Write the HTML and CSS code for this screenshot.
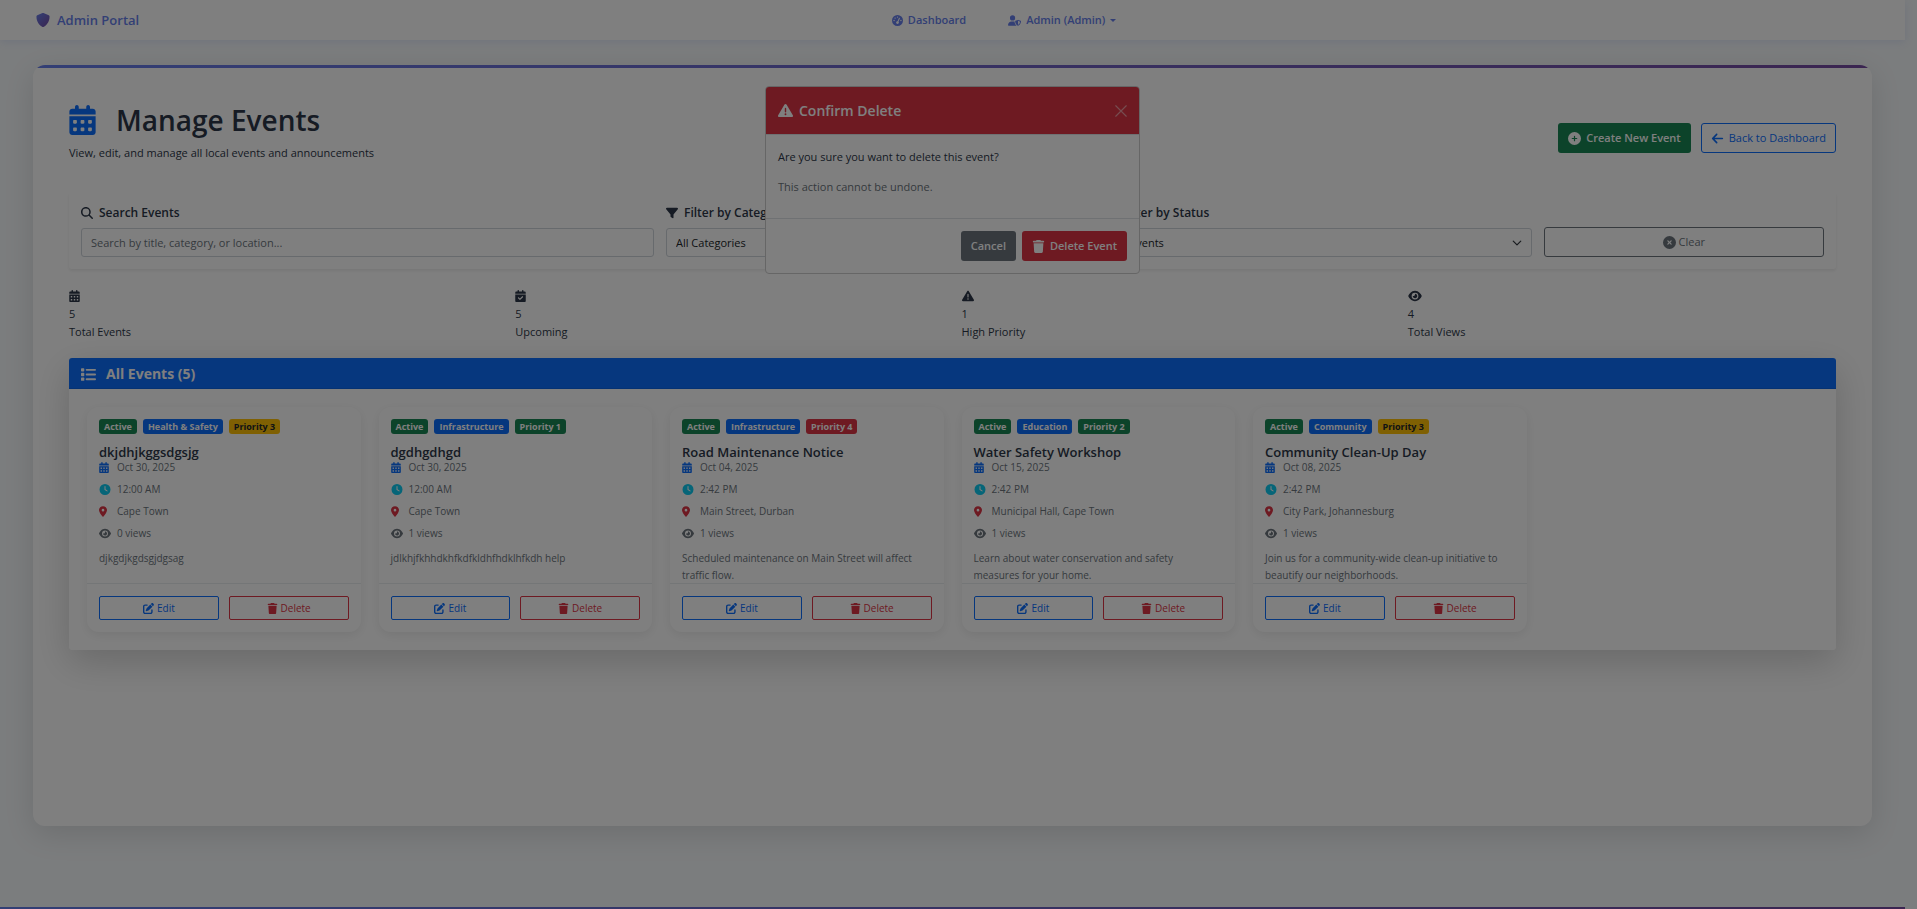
FILE: index.html
```html
<!DOCTYPE html>
<html lang="en">
<head>
<meta charset="utf-8">
<meta name="viewport" content="width=device-width, initial-scale=1">
<title>Manage Events - Admin Portal</title>
<link rel="stylesheet" href="styles.css">
</head>
<body>
<svg class="sprite" aria-hidden="true">
  <linearGradient id="brand-fill" x1="0" y1="0" x2="1" y2="1"><stop offset="0" stop-color="#667eea"/><stop offset="1" stop-color="#764ba2"/></linearGradient>
  <symbol id="i-shield" viewBox="0 0 512 512"><path fill="url(#brand-fill)" d="M466.5 83.7l-192-80a48.15 48.15 0 0 0-36.9 0l-192 80C27.7 91.1 16 108.6 16 128c0 198.5 114.5 335.7 221.5 380.3 11.8 4.9 25.1 4.9 36.9 0C360.1 472.6 496 349.3 496 128c0-19.4-11.7-36.9-29.5-44.3z"/></symbol>
  <symbol id="i-gauge" viewBox="0 0 512 512"><path fill-rule="evenodd" d="M0 256a256 256 0 1 1 512 0A256 256 0 1 1 0 256zM288 96a32 32 0 1 0 -64 0 32 32 0 1 0 64 0zM256 416c35.3 0 64-28.7 64-64c0-17.4-6.9-33.1-18.1-44.6L366 161.7c5.3-12.1-.2-26.3-12.3-31.6s-26.3 .2-31.6 12.3L257.9 288c-.6 0-1.3 0-1.9 0c-35.3 0-64 28.7-64 64s28.7 64 64 64zM176 144a32 32 0 1 0 -64 0 32 32 0 1 0 64 0zM96 288a32 32 0 1 0 0-64 32 32 0 1 0 0 64zm352-32a32 32 0 1 0 -64 0 32 32 0 1 0 64 0z"/></symbol>
  <symbol id="i-user-shield" viewBox="0 0 640 512"><path d="M224 256A128 128 0 1 0 224 0a128 128 0 1 0 0 256zm-45.7 48C79.8 304 0 383.8 0 482.3C0 498.7 13.3 512 29.7 512H418.3c1.8 0 3.5-.2 5.3-.5c-76.3-55.1-99.8-141-103.1-200.2c-16.1-4.8-33.1-7.3-50.7-7.3H178.3zm308.8-78.3l-120 48C358 277.4 352 286.2 352 296c0 63.3 25.9 168.8 134.8 214.2c5.9 2.5 12.6 2.5 18.5 0C614.1 464.8 640 359.3 640 296c0-9.8-6-18.6-15.1-22.3l-120-48c-5.7-2.3-12.1-2.3-17.8 0zM591.4 312c-3.9 50.7-27.2 116.7-95.4 149.7V273.8L591.4 312z"/></symbol>
  <symbol id="i-calendar" viewBox="0 0 448 512"><path fill-rule="evenodd" d="M128 0c17.7 0 32 14.3 32 32V64H288V32c0-17.7 14.3-32 32-32s32 14.3 32 32V64h48c26.5 0 48 21.5 48 48v48H0V112C0 85.5 21.5 64 48 64H96V32c0-17.7 14.3-32 32-32zM0 192H448V464c0 26.5-21.5 48-48 48H48c-26.5 0-48-21.5-48-48V192zm64 80v32c0 8.8 7.2 16 16 16h32c8.8 0 16-7.2 16-16V272c0-8.8-7.2-16-16-16H80c-8.8 0-16 7.2-16 16zm128 0v32c0 8.8 7.2 16 16 16h32c8.8 0 16-7.2 16-16V272c0-8.8-7.2-16-16-16H208c-8.8 0-16 7.2-16 16zm144-16c-8.8 0-16 7.2-16 16v32c0 8.8 7.2 16 16 16h32c8.8 0 16-7.2 16-16V272c0-8.8-7.2-16-16-16H336zM64 400v32c0 8.8 7.2 16 16 16h32c8.8 0 16-7.2 16-16V400c0-8.8-7.2-16-16-16H80c-8.8 0-16 7.2-16 16zm144-16c-8.8 0-16 7.2-16 16v32c0 8.8 7.2 16 16 16h32c8.8 0 16-7.2 16-16V400c0-8.8-7.2-16-16-16H208zm112 16v32c0 8.8 7.2 16 16 16h32c8.8 0 16-7.2 16-16V400c0-8.8-7.2-16-16-16H336c-8.8 0-16 7.2-16 16z"/></symbol>
  <symbol id="i-calendar-check" viewBox="0 0 448 512"><path fill-rule="evenodd" d="M128 0c17.7 0 32 14.3 32 32V64H288V32c0-17.7 14.3-32 32-32s32 14.3 32 32V64h48c26.5 0 48 21.5 48 48v48H0V112C0 85.5 21.5 64 48 64H96V32c0-17.7 14.3-32 32-32zM0 192H448V464c0 26.5-21.5 48-48 48H48c-26.5 0-48-21.5-48-48V192zM329 305c9.4-9.4 9.4-24.6 0-33.9s-24.6-9.4-33.9 0l-95 95-47-47c-9.4-9.4-24.6-9.4-33.9 0s-9.4 24.6 0 33.9l64 64c9.4 9.4 24.6 9.4 33.9 0L329 305z"/></symbol>
  <symbol id="i-warning" viewBox="0 0 512 512"><path fill-rule="evenodd" d="M256 32c14.2 0 27.3 7.5 34.5 19.8l216 368c7.3 12.4 7.3 27.7 .2 40.1S486.3 480 472 480H40c-14.3 0-27.6-7.7-34.7-20.1s-7-27.8 .2-40.1l216-368C228.7 39.5 241.8 32 256 32zm0 128c-13.3 0-24 10.7-24 24V296c0 13.3 10.7 24 24 24s24-10.7 24-24V184c0-13.3-10.7-24-24-24zm32 224a32 32 0 1 0 -64 0 32 32 0 1 0 64 0z"/></symbol>
  <symbol id="i-eye" viewBox="0 0 576 512"><path fill-rule="evenodd" d="M288 32c-80.8 0-145.5 36.8-192.6 80.6C48.6 156 17.3 208 2.5 243.7c-3.3 7.9-3.3 16.7 0 24.6C17.3 304 48.6 356 95.4 399.4C142.5 443.2 207.2 480 288 480s145.5-36.8 192.6-80.6c46.8-43.5 78.1-95.4 93-131.1c3.3-7.9 3.3-16.7 0-24.6c-14.9-35.7-46.2-87.7-93-131.1C433.5 68.8 368.8 32 288 32zM144 256a144 144 0 1 1 288 0 144 144 0 1 1 -288 0zm144-64c0 35.3-28.7 64-64 64c-7.1 0-13.9-1.2-20.3-3.3c-5.5-1.8-11.9 1.6-11.7 7.4c.3 6.9 1.3 13.8 3.2 20.7c13.7 51.2 66.4 81.6 117.6 67.9s81.6-66.4 67.9-117.6c-11.1-41.5-47.8-69.4-88.6-71.1c-5.8-.2-9.2 6.1-7.4 11.7c2.1 6.4 3.3 13.2 3.3 20.3z"/></symbol>
  <symbol id="i-clock" viewBox="0 0 512 512"><path fill-rule="evenodd" d="M256 0a256 256 0 1 1 0 512A256 256 0 1 1 256 0zM232 120V256c0 8 4 15.5 10.7 20l96 64c11 7.4 25.9 4.4 33.3-6.7s4.4-25.9-6.7-33.3L280 243.2V120c0-13.3-10.7-24-24-24s-24 10.7-24 24z"/></symbol>
  <symbol id="i-pin" viewBox="0 0 384 512"><path fill-rule="evenodd" d="M215.7 499.2C267 435 384 279.4 384 192C384 86 298 0 192 0S0 86 0 192c0 87.4 117 243 168.3 307.2c12.3 15.3 35.1 15.3 47.4 0zM192 128a64 64 0 1 1 0 128 64 64 0 1 1 0-128z"/></symbol>
  <symbol id="i-edit" viewBox="0 0 512 512"><path d="M471.6 21.7c-21.9-21.9-57.3-21.9-79.2 0L362.3 51.7l97.9 97.9 30.1-30.1c21.9-21.9 21.9-57.3 0-79.2L471.6 21.7zm-299.2 220c-6.1 6.1-10.8 13.6-13.5 21.9l-29.6 88.8c-2.9 8.6-.6 18.1 5.8 24.6s15.9 8.7 24.6 5.8l88.8-29.6c8.2-2.7 15.7-7.4 21.9-13.5L437.7 172.3 339.7 74.3 172.4 241.7zM96 64C43 64 0 107 0 160V416c0 53 43 96 96 96H352c53 0 96-43 96-96V320c0-17.7-14.3-32-32-32s-32 14.3-32 32v96c0 17.7-14.3 32-32 32H96c-17.7 0-32-14.3-32-32V160c0-17.7 14.3-32 32-32h96c17.7 0 32-14.3 32-32s-14.3-32-32-32H96z"/></symbol>
  <symbol id="i-trash" viewBox="0 0 448 512"><path d="M135.2 17.7L128 32H32C14.3 32 0 46.3 0 64S14.3 96 32 96H416c17.7 0 32-14.3 32-32s-14.3-32-32-32H320l-7.2-14.3C307.4 6.8 296.3 0 284.2 0H163.8c-12.1 0-23.2 6.8-28.6 17.7zM416 128H32L53.2 467c1.6 25.3 22.6 45 47.9 45H346.9c25.3 0 46.3-19.7 47.9-45L416 128z"/></symbol>
  <symbol id="i-search" viewBox="0 0 512 512"><path fill-rule="evenodd" d="M416 208c0 45.9-14.9 88.3-40 122.7L502.6 457.4c12.5 12.5 12.5 32.8 0 45.3s-32.8 12.5-45.3 0L330.7 376c-34.4 25.2-76.8 40-122.7 40C93.1 416 0 322.9 0 208S93.1 0 208 0S416 93.1 416 208zM208 352a144 144 0 1 0 0-288 144 144 0 1 0 0 288z"/></symbol>
  <symbol id="i-filter" viewBox="0 0 512 512"><path d="M3.9 54.9C10.5 40.9 24.5 32 40 32H472c15.5 0 29.5 8.9 36.1 22.9s4.6 30.5-5.2 42.5L320 320.9V448c0 12.1-6.8 23.2-17.7 28.6s-23.8 4.3-33.5-3l-64-48c-8.1-6-12.8-15.5-12.8-25.6V320.9L9 97.3C-.7 85.4-2.8 68.8 3.9 54.9z"/></symbol>
  <symbol id="i-list" viewBox="0 0 512 512"><rect x="0" y="40" width="112" height="112" rx="24"/><rect x="0" y="200" width="112" height="112" rx="24"/><rect x="0" y="360" width="112" height="112" rx="24"/><rect x="160" y="64" width="352" height="64" rx="32"/><rect x="160" y="224" width="352" height="64" rx="32"/><rect x="160" y="384" width="352" height="64" rx="32"/></symbol>
  <symbol id="i-plus" viewBox="0 0 512 512"><path fill-rule="evenodd" d="M256 512A256 256 0 1 0 256 0a256 256 0 1 0 0 512zM232 344V280H168c-13.3 0-24-10.7-24-24s10.7-24 24-24h64V168c0-13.3 10.7-24 24-24s24 10.7 24 24v64h64c13.3 0 24 10.7 24 24s-10.7 24-24 24H280v64c0 13.3-10.7 24-24 24s-24-10.7-24-24z"/></symbol>
  <symbol id="i-xmark" viewBox="0 0 512 512"><path fill-rule="evenodd" d="M256 512A256 256 0 1 0 256 0a256 256 0 1 0 0 512zM175 175c9.4-9.4 24.6-9.4 33.9 0l47 47 47-47c9.4-9.4 24.6-9.4 33.9 0s9.4 24.6 0 33.9l-47 47 47 47c9.4 9.4 9.4 24.6 0 33.9s-24.6 9.4-33.9 0l-47-47-47 47c-9.4 9.4-24.6 9.4-33.9 0s-9.4-24.6 0-33.9l47-47-47-47c-9.4-9.4-9.4-24.6 0-33.9z"/></symbol>
  <symbol id="i-arrow" viewBox="0 0 448 512"><path d="M9.4 233.4c-12.5 12.5-12.5 32.8 0 45.3l160 160c12.5 12.5 32.8 12.5 45.3 0s12.5-32.8 0-45.3L109.2 288 416 288c17.7 0 32-14.3 32-32s-14.3-32-32-32l-306.7 0L214.6 118.6c12.5-12.5 12.5-32.8 0-45.3s-32.8-12.5-45.3 0l-160 160z"/></symbol>
  <symbol id="i-chevron" viewBox="0 0 16 16"><path fill="none" stroke="#343a40" stroke-width="2" stroke-linecap="round" stroke-linejoin="round" d="m2 5 6 6 6-6"/></symbol>
  <symbol id="i-close" viewBox="0 0 16 16"><path fill="none" stroke="currentColor" stroke-width="1.5" stroke-linecap="round" d="M1 1l14 14M15 1L1 15"/></symbol>
</svg>

<header class="navbar">
  <a class="brand" href="#"><svg class="icon"><use href="#i-shield"/></svg>Admin Portal</a>
  <nav class="nav-links">
    <a class="nav-link" href="#"><svg class="icon"><use href="#i-gauge"/></svg>Dashboard</a>
    <a class="nav-link" href="#"><svg class="icon icon-wide"><use href="#i-user-shield"/></svg>Admin (Admin)<span class="caret"></span></a>
  </nav>
</header>

<main class="page">
  <div class="page-head">
    <div>
      <h1 class="page-title"><svg class="icon"><use href="#i-calendar"/></svg>Manage Events</h1>
      <p class="page-sub">View, edit, and manage all local events and announcements</p>
    </div>
    <div class="page-actions">
      <a class="btn btn-success" href="#"><svg class="icon"><use href="#i-plus"/></svg>Create New Event</a>
      <a class="btn btn-outline-primary" href="#"><svg class="icon"><use href="#i-arrow"/></svg>Back to Dashboard</a>
    </div>
  </div>

  <form class="filters">
    <div class="field field-search">
      <label class="label" for="search"><svg class="icon"><use href="#i-search"/></svg>Search Events</label>
      <input class="control" id="search" type="text" placeholder="Search by title, category, or location...">
    </div>
    <div class="field">
      <label class="label" for="category"><svg class="icon"><use href="#i-filter"/></svg>Filter by Category</label>
      <div class="select-wrap"><select class="control" id="category"><option>All Categories</option></select><svg class="icon"><use href="#i-chevron"/></svg></div>
    </div>
    <div class="field">
      <label class="label" for="status"><svg class="icon"><use href="#i-filter"/></svg>Filter by Status</label>
      <div class="select-wrap"><select class="control" id="status"><option>All Events</option></select><svg class="icon"><use href="#i-chevron"/></svg></div>
    </div>
    <div class="field field-clear">
      <button class="btn btn-outline-secondary" type="button"><svg class="icon"><use href="#i-xmark"/></svg>Clear</button>
    </div>
  </form>

  <section class="stats">
    <div><div class="stat-icon"><svg class="icon"><use href="#i-calendar"/></svg></div><div>5</div><div>Total Events</div></div>
    <div><div class="stat-icon"><svg class="icon"><use href="#i-calendar-check"/></svg></div><div>5</div><div>Upcoming</div></div>
    <div><div class="stat-icon"><svg class="icon icon-wide"><use href="#i-warning"/></svg></div><div>1</div><div>High Priority</div></div>
    <div><div class="stat-icon"><svg class="icon icon-eye"><use href="#i-eye"/></svg></div><div>4</div><div>Total Views</div></div>
  </section>

  <section class="panel">
    <h2 class="panel-head"><svg class="icon"><use href="#i-list"/></svg>All Events (5)</h2>
    <div class="cards">
      <article class="card">
        <div class="card-body">
          <div class="badges"><span class="badge green">Active</span><span class="badge blue">Health &amp; Safety</span><span class="badge yellow">Priority 3</span></div>
          <h3 class="card-title">dkjdhjkggsdgsjg</h3>
          <ul class="meta">
            <li><svg class="icon c-blue"><use href="#i-calendar"/></svg>Oct 30, 2025</li>
            <li><svg class="icon c-cyan"><use href="#i-clock"/></svg>12:00 AM</li>
            <li><svg class="icon c-red"><use href="#i-pin"/></svg>Cape Town</li>
            <li><svg class="icon c-gray"><use href="#i-eye"/></svg>0 views</li>
          </ul>
          <p class="desc">djkgdjkgdsgjdgsag</p>
        </div>
        <div class="card-foot"><button class="btn btn-sm btn-outline-primary" type="button"><svg class="icon"><use href="#i-edit"/></svg>Edit</button><button class="btn btn-sm btn-outline-danger" type="button"><svg class="icon"><use href="#i-trash"/></svg>Delete</button></div>
      </article>
      <article class="card">
        <div class="card-body">
          <div class="badges"><span class="badge green">Active</span><span class="badge blue">Infrastructure</span><span class="badge green">Priority 1</span></div>
          <h3 class="card-title">dgdhgdhgd</h3>
          <ul class="meta">
            <li><svg class="icon c-blue"><use href="#i-calendar"/></svg>Oct 30, 2025</li>
            <li><svg class="icon c-cyan"><use href="#i-clock"/></svg>12:00 AM</li>
            <li><svg class="icon c-red"><use href="#i-pin"/></svg>Cape Town</li>
            <li><svg class="icon c-gray"><use href="#i-eye"/></svg>1 views</li>
          </ul>
          <p class="desc">jdlkhjfkhhdkhfkdfkldhfhdklhfkdh help</p>
        </div>
        <div class="card-foot"><button class="btn btn-sm btn-outline-primary" type="button"><svg class="icon"><use href="#i-edit"/></svg>Edit</button><button class="btn btn-sm btn-outline-danger" type="button"><svg class="icon"><use href="#i-trash"/></svg>Delete</button></div>
      </article>
      <article class="card">
        <div class="card-body">
          <div class="badges"><span class="badge green">Active</span><span class="badge blue">Infrastructure</span><span class="badge red">Priority 4</span></div>
          <h3 class="card-title">Road Maintenance Notice</h3>
          <ul class="meta">
            <li><svg class="icon c-blue"><use href="#i-calendar"/></svg>Oct 04, 2025</li>
            <li><svg class="icon c-cyan"><use href="#i-clock"/></svg>2:42 PM</li>
            <li><svg class="icon c-red"><use href="#i-pin"/></svg>Main Street, Durban</li>
            <li><svg class="icon c-gray"><use href="#i-eye"/></svg>1 views</li>
          </ul>
          <p class="desc">Scheduled maintenance on Main Street will affect traffic flow.</p>
        </div>
        <div class="card-foot"><button class="btn btn-sm btn-outline-primary" type="button"><svg class="icon"><use href="#i-edit"/></svg>Edit</button><button class="btn btn-sm btn-outline-danger" type="button"><svg class="icon"><use href="#i-trash"/></svg>Delete</button></div>
      </article>
      <article class="card">
        <div class="card-body">
          <div class="badges"><span class="badge green">Active</span><span class="badge blue">Education</span><span class="badge green">Priority 2</span></div>
          <h3 class="card-title">Water Safety Workshop</h3>
          <ul class="meta">
            <li><svg class="icon c-blue"><use href="#i-calendar"/></svg>Oct 15, 2025</li>
            <li><svg class="icon c-cyan"><use href="#i-clock"/></svg>2:42 PM</li>
            <li><svg class="icon c-red"><use href="#i-pin"/></svg>Municipal Hall, Cape Town</li>
            <li><svg class="icon c-gray"><use href="#i-eye"/></svg>1 views</li>
          </ul>
          <p class="desc">Learn about water conservation and safety measures for your home.</p>
        </div>
        <div class="card-foot"><button class="btn btn-sm btn-outline-primary" type="button"><svg class="icon"><use href="#i-edit"/></svg>Edit</button><button class="btn btn-sm btn-outline-danger" type="button"><svg class="icon"><use href="#i-trash"/></svg>Delete</button></div>
      </article>
      <article class="card">
        <div class="card-body">
          <div class="badges"><span class="badge green">Active</span><span class="badge blue">Community</span><span class="badge yellow">Priority 3</span></div>
          <h3 class="card-title">Community Clean-Up Day</h3>
          <ul class="meta">
            <li><svg class="icon c-blue"><use href="#i-calendar"/></svg>Oct 08, 2025</li>
            <li><svg class="icon c-cyan"><use href="#i-clock"/></svg>2:42 PM</li>
            <li><svg class="icon c-red"><use href="#i-pin"/></svg>City Park, Johannesburg</li>
            <li><svg class="icon c-gray"><use href="#i-eye"/></svg>1 views</li>
          </ul>
          <p class="desc">Join us for a community-wide clean-up initiative to beautify our neighborhoods.</p>
        </div>
        <div class="card-foot"><button class="btn btn-sm btn-outline-primary" type="button"><svg class="icon"><use href="#i-edit"/></svg>Edit</button><button class="btn btn-sm btn-outline-danger" type="button"><svg class="icon"><use href="#i-trash"/></svg>Delete</button></div>
      </article>
    </div>
  </section>
</main>

<footer class="footer"></footer>

<div class="modal-layer">
  <div class="modal" role="dialog" aria-labelledby="modal-title">
    <div class="modal-head">
      <h2 class="modal-title" id="modal-title"><svg class="icon"><use href="#i-warning"/></svg>Confirm Delete</h2>
      <button class="close" type="button" aria-label="Close"><svg class="icon"><use href="#i-close"/></svg></button>
    </div>
    <div class="modal-body">
      <p>Are you sure you want to delete this event?</p>
      <p class="muted">This action cannot be undone.</p>
    </div>
    <div class="modal-foot">
      <button class="btn btn-secondary" type="button">Cancel</button>
      <button class="btn btn-danger" type="button"><svg class="icon"><use href="#i-trash"/></svg>Delete Event</button>
    </div>
  </div>
</div>
<div class="backdrop"></div>
</body>
</html>
```

FILE: styles.css
```css
* { box-sizing: border-box; }

html { background: #f7fafc; }

body {
  margin: 0;
  padding-right: 12px;
  min-height: 100vh;
  display: flex;
  flex-direction: column;
  font-family: "Segoe UI", "Open Sans", "Noto Sans", sans-serif;
  font-size: 11px;
  line-height: 18px;
  color: #2d3748;
}

h1, h2, h3, p, ul { margin: 0; padding: 0; }
a { color: inherit; text-decoration: none; }
button, input, select { font: inherit; }

.sprite { position: absolute; width: 0; height: 0; }
.icon { width: 12px; height: 12px; fill: currentColor; flex: none; }

/* Navigation */
.navbar {
  display: flex;
  align-items: center;
  height: 40px;
  padding: 0 36px;
  background: #fff;
  box-shadow: 0 2px 8px rgba(102, 126, 234, 0.15);
  color: #667eea;
  font-weight: 600;
}
.brand { display: flex; align-items: center; gap: 7px; font-size: 13px; }
.brand .icon { width: 14px; height: 14px; }
.nav-links { flex: 1; display: flex; justify-content: center; gap: 42px; }
.nav-link { display: flex; align-items: center; gap: 5px; }
.nav-link .icon { width: 11px; height: 11px; }
.nav-link .icon-wide { width: 13px; }
.caret { border: 3px solid transparent; border-top-color: currentColor; border-bottom: 0; }

/* Page shell */
.page {
  position: relative;
  flex: 1;
  margin: 25px 33px 81px;
  padding: 37px 36px 36px;
  background: #fff;
  border-radius: 12px;
  box-shadow: 0 8px 30px rgba(0, 0, 0, 0.12);
}
.page::before {
  content: "";
  position: absolute;
  inset: 0;
  border-radius: inherit;
  background: linear-gradient(90deg, #667eea, #764ba2) top / 100% 3px no-repeat;
  pointer-events: none;
}
.page-head { display: flex; justify-content: space-between; align-items: center; margin-bottom: 30px; }
.page-title { display: flex; align-items: center; gap: 20px; font-size: 28px; line-height: 36px; font-weight: 600; margin-bottom: 6px; }
.page-title .icon { width: 27px; height: 30px; color: #0d6efd; }
.page-actions { display: flex; gap: 10px; padding-top: 12px; }

/* Buttons */
.btn {
  display: inline-flex;
  align-items: center;
  justify-content: center;
  gap: 5px;
  padding: 5px 9px;
  border: 1px solid transparent;
  border-radius: 3px;
  background: transparent;
  line-height: 18px;
}
.btn .icon { width: 13px; height: 13px; }
.btn-success { background: #198754; color: #fff; font-weight: 600; }
.btn-danger { background: #dc3545; color: #fff; font-weight: 600; }
.btn-secondary { background: #6c757d; color: #fff; font-weight: 600; }
.btn-outline-primary { border-color: #0d6efd; color: #0d6efd; }
.btn-outline-danger { border-color: #dc3545; color: #dc3545; }
.btn-outline-secondary { border-color: #6c757d; color: #6c757d; gap: 3px; }
.btn-sm { flex: 1; gap: 3px; padding: 3px 6px; font-size: 10px; line-height: 16px; border-radius: 2px; }
.btn-sm .icon { width: 11px; height: 11px; }

/* Filters */
.filters {
  display: grid;
  grid-template-columns: repeat(12, minmax(0, 1fr));
  gap: 12px;
  padding: 12px;
  margin-bottom: 18px;
  border-radius: 3px;
  box-shadow: 0 2px 3px rgba(0, 0, 0, 0.07);
}
.field { grid-column: span 3; }
.field-search { grid-column: span 4; }
.field-clear { grid-column: span 2; display: flex; align-items: flex-end; }
.field-clear .btn { flex: 1; }
.label { display: flex; align-items: center; gap: 6px; margin-bottom: 6px; font-size: 12px; font-weight: 600; }
.control {
  display: block;
  width: 100%;
  height: 29px;
  padding: 5px 9px;
  border: 1px solid #ced4da;
  border-radius: 3px;
  background: #fff;
  color: #212529;
  appearance: none;
}
.control::placeholder { color: #6c757d; opacity: 1; }
.select-wrap { display: grid; align-items: center; }
.select-wrap > * { grid-area: 1 / 1; }
.select-wrap .icon { justify-self: end; margin-right: 10px; width: 10px; pointer-events: none; }

/* Stats */
.stats { display: grid; grid-template-columns: repeat(4, minmax(0, 1fr)); gap: 18px; margin-bottom: 17px; }
.stat-icon { display: flex; align-items: center; height: 18px; }
.stat-icon .icon { width: 11px; }
.stat-icon .icon-wide { width: 12px; }
.stat-icon .icon-eye { width: 14px; }

/* Events panel */
.panel { border-radius: 3px; box-shadow: 0 12px 36px rgba(0, 0, 0, 0.175); background: #fff; }
.panel-head {
  display: flex;
  align-items: center;
  gap: 10px;
  padding: 7px 12px 5px;
  border-bottom: 1px solid #0b64e6;
  border-radius: 3px 3px 0 0;
  background: #0d6efd;
  color: #fff;
  font-size: 14px;
  line-height: 18px;
  font-weight: 700;
}
.panel-head .icon { width: 15px; height: 15px; }
.cards { display: grid; grid-template-columns: repeat(6, minmax(0, 1fr)); gap: 18px; padding: 18px; }
.card { display: flex; flex-direction: column; border-radius: 12px; box-shadow: 0 3px 11px rgba(0, 0, 0, 0.08); }
.card-body { flex: 1; padding: 12px 12px 0; }
.badges { display: flex; gap: 6px; margin-bottom: 11px; }
.badge { padding: 0 5px; border-radius: 3px; font-size: 9px; line-height: 15px; font-weight: 700; color: #fff; }
.green { background: #198754; }
.blue { background: #0d6efd; }
.red { background: #dc3545; }
.yellow { background: #ffc107; color: #212529; }
.card-title { font-size: 13px; line-height: 14px; font-weight: 600; }
.meta { display: grid; gap: 6px; list-style: none; margin-bottom: 9px; font-size: 10px; line-height: 16px; color: #6c757d; }
.meta li { display: grid; grid-template-columns: 12px 1fr; gap: 6px; align-items: center; }
.meta .icon { width: 12px; height: 11px; }
.meta .c-blue { width: 10px; }
.meta .c-red { width: 8px; }
.c-blue { color: #0d6efd; }
.c-cyan { color: #0dcaf0; }
.c-red { color: #dc3545; }
.c-gray { color: #6c757d; }
.desc { height: 33px; padding-right: 6px; font-size: 10px; line-height: 17px; color: #6c757d; }
.card-foot { display: flex; gap: 10px; padding: 12px; border-top: 1px solid #e9ecef; }

.footer { height: 2px; background: linear-gradient(90deg, #667eea, #764ba2); }

/* Dialog */
.modal-layer {
  position: fixed;
  inset: 0 12px 0 0;
  display: flex;
  justify-content: center;
  align-items: flex-start;
  padding: 86px 12px 12px;
}
.modal { width: 375px; border: 1px solid #ccc; border-radius: 4px; background: #fff; overflow: hidden; }
.modal-head {
  display: flex;
  align-items: center;
  justify-content: space-between;
  padding: 12px;
  border-bottom: 1px solid #dee2e6;
  background: #dc3545;
  color: #fff;
}
.modal-title { display: flex; align-items: center; gap: 6px; font-size: 14px; line-height: 23px; font-weight: 600; }
.modal-title .icon { width: 15px; height: 15px; }
.close { display: flex; padding: 0; border: 0; background: none; color: #fff; opacity: 0.5; }
.modal-body { padding: 13px 12px 10px; }
.modal-body p { margin-bottom: 12px; }
.muted { color: #6c757d; }
.modal-foot { display: flex; justify-content: flex-end; gap: 6px; padding: 12px; border-top: 1px solid #dee2e6; }

.backdrop { position: fixed; inset: 0; background: rgba(0, 0, 0, 0.5); pointer-events: none; }
```
